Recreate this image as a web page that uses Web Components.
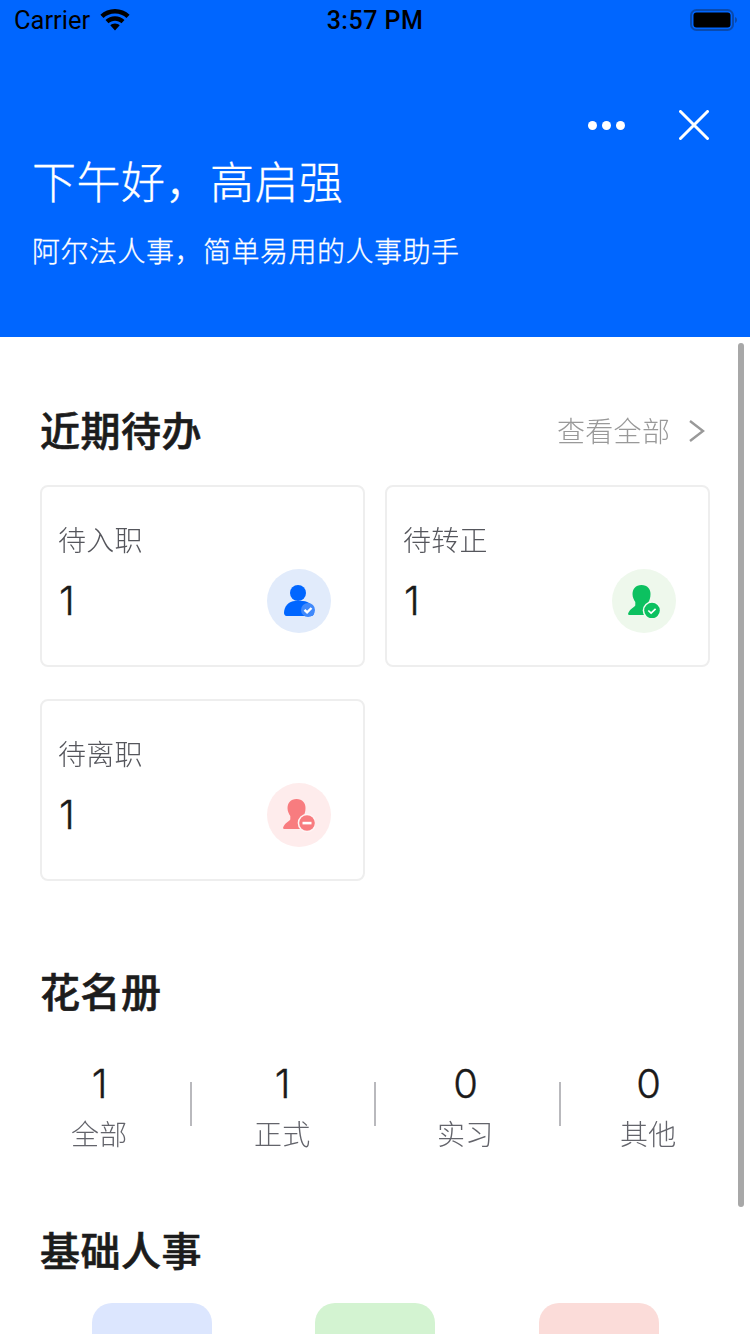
<!DOCTYPE html>
<html lang="zh-CN">
<head>
<meta charset="utf-8">
<title>人事助手</title>
<style>
  html, body { margin: 0; padding: 0; background: #fff; }
  body { width: 750px; height: 1334px; overflow: hidden; font-family: "Noto Sans CJK SC", sans-serif; }
</style>
</head>
<body>
<hr-app></hr-app>

<template id="t-status">
  <style>
    :host { display: flex; height: 40px; padding: 0 13px 0 14px; align-items: center; justify-content: space-between; position: relative; color: #000; font-family: Roboto, "Liberation Sans", sans-serif; font-size: 25.500px; }
    .left { display: flex; align-items: center; gap: 10px; }
    .time { position: absolute; left: 0; right: 0; text-align: center; font-weight: 500; font-size: 25px; letter-spacing: .5px; }
    svg { display: block; }
  </style>
  <div class="left"><span>Carrier</span>
    <svg width="30" height="22" viewBox="0 0 30 22"><path d="M15 0C9.300 0 4.200 2.200.4 5.800l3.100 3.200C6.500 6.200 10.500 4.500 15 4.500S23.500 6.200 26.500 9l3.100-3.200C25.800 2.200 20.700 0 15 0zM15 7.300c-3.700 0-7 1.400-9.500 3.700l3 3.200c1.700-1.500 4-2.500 6.500-2.500s4.800 1 6.500 2.500l3-3.200C22 8.700 18.700 7.300 15 7.300zM15 14.500c-1.900 0-3.500.7-4.700 1.800L15 21.500l4.700-5.200c-1.200-1.100-2.800-1.800-4.700-1.800z"/></svg>
  </div>
  <span class="time">3:57 PM</span>
  <svg width="47" height="22" viewBox="0 0 47 22"><rect x="1" y="1" width="42" height="20" rx="5.500" fill="none" stroke="#0a4aad" stroke-width="2"/><rect x="3.500" y="3.500" width="37" height="15" rx="3" fill="#000"/><path d="M45 8v6c1.200-.4 2-1.600 2-3s-.8-2.600-2-3z" fill="#0a4aad"/></svg>
</template>

<template id="t-header">
  <style>
    :host { display: block; height: 337px; background: #0066ff; color: #fff; box-sizing: border-box; }
    .actions { display: flex; justify-content: flex-end; align-items: center; gap: 54px; padding: 0 41px 0 0; margin-top: 67px; height: 36px; }
    .dots { display: flex; gap: 5px; }
    .dots i { width: 9px; height: 9px; border-radius: 50%; background: #fff; display: block; }
    svg { display: block; }
    h1 { margin: 0; padding-left: 32px; font-size: 44px; font-weight: 300; -webkit-text-stroke: .3px #fff; line-height: 64px; margin-top: 5px; letter-spacing: .5px; }
    p { margin: 0; padding-left: 32px; font-size: 28px; font-weight: 300; -webkit-text-stroke: .3px #fff; line-height: 40px; margin-top: 18px; letter-spacing: .5px; }
  </style>
  <status-bar></status-bar>
  <div class="actions">
    <div class="dots"><i></i><i></i><i></i></div>
    <svg width="30" height="30" viewBox="0 0 30 30"><path d="M1.500 1.500 28.500 28.500M28.500 1.500 1.500 28.500" fill="none" stroke="#fff" stroke-width="3" stroke-linecap="round"/></svg>
  </div>
  <h1>下午好&#65292;高启强</h1>
  <p>阿尔法人事&#65292;简单易用的人事助手</p>
</template>

<template id="t-section">
  <style>
    :host { display: block; padding: 0 40px; }
    .head { display: flex; justify-content: space-between; align-items: center; height: 56px; }
    h2 { margin: 0; font-size: 40px; font-weight: 500; -webkit-text-stroke: .6px #1c1c1c; letter-spacing: .5px; color: #1c1c1c; line-height: 56px; }
  </style>
  <div class="head"><h2><slot name="title"></slot></h2><slot name="more"></slot></div>
  <slot></slot>
</template>

<template id="t-more">
  <style>
    :host { display: flex; align-items: center; gap: 18px; color: #999; font-size: 28px; font-weight: 300; padding: 2px 5px 0 0; }
    svg { display: block; margin-top: 2px; }
    span { will-change: transform; letter-spacing: .3px; }
  </style>
  <span><slot></slot></span>
  <svg width="17" height="24" viewBox="0 0 17 24"><path d="M2 2l13 10L2 22" fill="none" stroke="#999" stroke-width="2.400"/></svg>
</template>

<template id="t-grid">
  <style>
    :host { display: grid; grid-template-columns: 325px 325px; gap: 32px 20px; margin-top: 28px; }
  </style>
  <slot></slot>
</template>

<template id="t-card">
  <style>
    :host { display: block; height: 182px; box-sizing: border-box; border: 2px solid #eeeeee; border-radius: 8px; padding: 32px 32px 0 16px; }
    .label { font-size: 28px; font-weight: 300; color: #55565c; line-height: 40px; letter-spacing: .3px; will-change: transform; }
    .row { display: flex; justify-content: space-between; align-items: center; margin-top: 10px; }
    .num { font-family: Inter, Roboto, sans-serif; font-size: 40px; font-weight: 300; -webkit-text-stroke: .35px #1a1a1a; color: #1a1a1a; line-height: 64px; margin-left: 1px; }
    .badge { width: 64px; height: 64px; border-radius: 50%; background: var(--tint); display: flex; align-items: center; justify-content: center; }
  </style>
  <div class="label"><slot name="label"></slot></div>
  <div class="row"><span class="num"><slot name="num"></slot></span><span class="badge"><slot name="icon"></slot></span></div>
</template>

<template id="t-stats">
  <style>
    :host { display: grid; grid-template-columns: repeat(4, 183px); margin: 39px -40px 0; padding: 0 10px 0 8px; }
  </style>
  <slot></slot>
</template>

<template id="t-stat">
  <style>
    :host { display: flex; flex-direction: column; align-items: center; position: relative; --shift: 0px; }
    :host(:nth-child(2)) { --shift: -1px; }
    :host(:nth-child(3)) { --shift: -3px; }
    .num { font-family: Inter, Roboto, sans-serif; font-size: 40px; font-weight: 300; -webkit-text-stroke: .35px #1a1a1a; color: #1a1a1a; line-height: 54px; }
    .label { font-size: 28px; font-weight: 300; color: #63646b; line-height: 40px; margin-top: 2px; letter-spacing: .3px; will-change: transform; }
    :host(:not(:last-child))::after { content: ""; position: absolute; right: calc(var(--shift) - 1px); top: 25px; width: 2px; height: 44px; background: #b9b9bd; }
  </style>
  <span class="num"><slot name="num"></slot></span>
  <span class="label"><slot name="label"></slot></span>
</template>

<template id="t-tiles">
  <style>
    :host { display: grid; grid-template-columns: repeat(3, 120px); column-gap: 103.4px; padding-left: 51.8px; margin-top: 26px; }
  </style>
  <slot></slot>
</template>

<template id="t-tile">
  <style>
    :host { display: block; height: 120px; border-radius: 20px; background: var(--tint); }
  </style>
</template>

<template id="t-app">
  <style>
    :host { display: block; position: relative; width: 750px; height: 1334px; overflow: hidden; background: #fff; font-family: "Noto Sans CJK SC", sans-serif; }
    .body { display: flex; flex-direction: column; padding-top: 64px; }
    .s2 { margin-top: 81px; }
    .s3 { margin-top: 68px; }
    .scroll { position: absolute; left: 738px; top: 343px; width: 6px; height: 864px; border-radius: 3px; background: #a8a8a8; }
  </style>
  <hr-header></hr-header>
  <div class="body">
    <hr-section>
      <span slot="title">近期待办</span>
      <more-link slot="more">查看全部</more-link>
      <card-grid>
        <todo-card style="--tint:#e1ebfb">
          <span slot="label">待入职</span><span slot="num">1</span>
          <svg slot="icon" width="32" height="34" viewBox="0 0 32 34">
            <circle cx="15" cy="9" r="8" fill="#0066ff"/>
            <path d="M1 29c0-7 5-12 11-12h8c6 0 11 5 11 12 0 1.500-1 3-2.500 3h-25C2 32 1 30.500 1 29z" fill="#0066ff"/>
            <circle cx="25" cy="26" r="7" fill="#4089fb"/>
            <path d="M21.500 25.800l2.600 2.500 4.400-4.300" fill="none" stroke="#fff" stroke-width="2.400"/>
          </svg>
        </todo-card>
        <todo-card style="--tint:#eef8ec">
          <span slot="label">待转正</span><span slot="num">1</span>
          <svg slot="icon" width="32" height="34" viewBox="0 0 32 34">
            <path d="M13.500 1C19.500 1 22.500 5 22.500 10c0 3.500-.8 6-2 8v2.500c2.500 1.500 5 2.500 6.500 6.500v4H1.500C.3 31-.2 30 .3 29c1.700-4 4.700-5 7-7.500V18c-1.300-2-2.800-4.500-2.800-8C4.500 5 7.500 1 13.500 1z" fill="#0cc160"/>
            <circle cx="24" cy="26.500" r="9.300" fill="#f3fbf1"/>
            <circle cx="24" cy="26.500" r="7.800" fill="#0cc160"/>
            <path d="M20.300 26.500l2.800 2.600 4.500-4.300" fill="none" stroke="#fff" stroke-width="1.700"/>
          </svg>
        </todo-card>
        <todo-card style="--tint:#feecec">
          <span slot="label">待离职</span><span slot="num">1</span>
          <svg slot="icon" width="32" height="34" viewBox="0 0 32 34">
            <path d="M13.500 1C19.500 1 22.500 5 22.500 10c0 3.500-.8 6-2 8v2.500c2.500 1.500 5 2.500 6.500 6.500v4H1.500C.3 31-.2 30 .3 29c1.700-4 4.700-5 7-7.500V18c-1.300-2-2.800-4.500-2.800-8C4.500 5 7.500 1 13.500 1z" fill="#f87c7f"/>
            <circle cx="24" cy="25" r="9.300" fill="#fff5f5"/>
            <circle cx="24" cy="25" r="7.800" fill="#f87c7f"/>
            <rect x="19.500" y="23.800" width="9" height="2.600" fill="#fff"/>
          </svg>
        </todo-card>
      </card-grid>
    </hr-section>
    <hr-section class="s2">
      <span slot="title">花名册</span>
      <stat-row>
        <stat-item><span slot="num">1</span><span slot="label">全部</span></stat-item>
        <stat-item><span slot="num">1</span><span slot="label">正式</span></stat-item>
        <stat-item><span slot="num">0</span><span slot="label">实习</span></stat-item>
        <stat-item><span slot="num">0</span><span slot="label">其他</span></stat-item>
      </stat-row>
    </hr-section>
    <hr-section class="s3">
      <span slot="title">基础人事</span>
      <tile-row>
        <app-tile style="--tint:#dce6fe"></app-tile>
        <app-tile style="--tint:#d3f3d1"></app-tile>
        <app-tile style="--tint:#fbdcd9"></app-tile>
      </tile-row>
    </hr-section>
  </div>
  <div class="scroll"></div>
</template>

<script>
  // Each element stamps its own template into an open shadow root.
  const register = (tag, id) => customElements.define(tag, class extends HTMLElement {
    constructor() {
      super();
      this.attachShadow({ mode: "open" }).appendChild(document.getElementById(id).content.cloneNode(true));
    }
  });
  register("status-bar", "t-status");
  register("hr-header", "t-header");
  register("hr-section", "t-section");
  register("more-link", "t-more");
  register("card-grid", "t-grid");
  register("todo-card", "t-card");
  register("stat-row", "t-stats");
  register("stat-item", "t-stat");
  register("tile-row", "t-tiles");
  register("app-tile", "t-tile");
  register("hr-app", "t-app");
</script>
</body>
</html>
